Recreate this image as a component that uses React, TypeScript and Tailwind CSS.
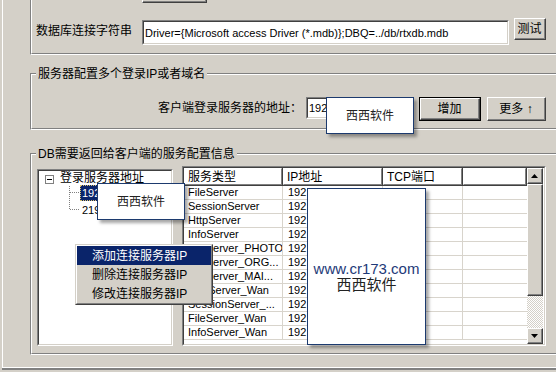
import React from "react";

type P = { className?: string; innerClass?: string; children?: React.ReactNode; def?: boolean };

function Raised({ className = "", innerClass = "", children, def = false }: P) {
  const core = (
    <div className="h-full w-full border-t border-l border-t-white border-l-white border-r border-b border-r-[#404040] border-b-[#404040]">
      <div className={`h-full w-full border-r border-b border-r-[#808080] border-b-[#808080] flex items-center justify-center ${innerClass}`}>
        {children}
      </div>
    </div>
  );
  if (def) return <div className={`border border-black ${className}`}>{core}</div>;
  return <div className={className}>{core}</div>;
}

function Sunken({ className = "", innerClass = "", children }: P) {
  return (
    <div className={`border-t border-l border-t-[#808080] border-l-[#808080] border-r border-b border-r-white border-b-white ${className}`}>
      <div className={`h-full w-full border-t border-l border-t-[#404040] border-l-[#404040] border-r border-b border-r-[#d4d0c8] border-b-[#d4d0c8] bg-white overflow-hidden ${innerClass}`}>
        {children}
      </div>
    </div>
  );
}

function Group({ className = "", title, children }: P & { title?: string }) {
  return (
    <div className={`shrink-0 border-t border-l border-t-[#808080] border-l-[#808080] border-r border-b border-r-white border-b-white ${className}`}>
      <div className="h-full w-full border-t border-l border-t-white border-l-white border-r border-b border-r-[#808080] border-b-[#808080] flex flex-col">
        {title && <div className="-mt-[8px] ml-[4px] px-[2px] self-start bg-[#d4d0c8] leading-[14px]">{title}</div>}
        {children}
      </div>
    </div>
  );
}

function HeaderCell({ className = "", children }: P) {
  return (
    <div className={`h-full border-r border-b border-r-[#404040] border-b-[#404040] ${className}`}>
      <div className="h-full border-t border-l border-t-white border-l-white border-r border-b border-r-[#808080] border-b-[#808080] pl-[3px] flex items-center whitespace-nowrap overflow-hidden">
        {children}
      </div>
    </div>
  );
}

function Watermark({ className = "", children }: P) {
  return (
    <div className={`absolute bg-white border border-[#1c3a6e] shadow-[3px_3px_3px_rgba(0,0,0,0.35)] ${className}`}>{children}</div>
  );
}

const Up = () => (
  <svg width="7" height="4" viewBox="0 0 7 4"><path d="M3.5 0 L7 4 L0 4Z" fill="black" /></svg>
);
const Down = () => (
  <svg width="7" height="4" viewBox="0 0 7 4"><path d="M0 0 L7 0 L3.5 4Z" fill="black" /></svg>
);

const rows = [
  "FileServer",
  "SessionServer",
  "HttpServer",
  "InfoServer",
  "FileServer_PHOTO",
  "FileServer_ORG...",
  "FileServer_MAI...",
  "HttpServer_Wan",
  "SessionServer_...",
  "FileServer_Wan",
  "InfoServer_Wan",
];

export default function App() {
  return (
    <div className="relative w-[556px] h-[372px] overflow-hidden bg-[#d4d0c8] font-['Liberation_Sans','Noto_Sans_CJK_SC',sans-serif] text-[12px] leading-[14px] text-black">
      <div className="ml-[2px] w-[600px] h-[368px] border-l border-b border-l-white border-b-white pl-[27px] flex flex-col">
        {/* top group */}
        <Group className="-mt-[20px] h-[75px] w-[540px]">
          <Raised className="ml-[110px] w-[65px] h-[21px]" />
          <div className="mt-[15px] flex items-start">
            <div className="ml-[4px] mt-[6px] whitespace-nowrap">数据库连接字符串</div>
            <Sunken className="ml-[10px] mt-[2px] w-[367px] h-[25px]" innerClass="pl-[1px] flex items-center">
              <span className="text-[11px] whitespace-nowrap">Driver={"{"}Microsoft access Driver (*.mdb){"}"};DBQ=../db/rtxdb.mdb</span>
            </Sunken>
            <Raised className="ml-[5px] w-[32px] h-[22px]">测试</Raised>
          </div>
        </Group>

        {/* middle group */}
        <Group className="mt-[18px] h-[57px] w-[540px]" title="服务器配置多个登录IP或者域名">
          <div className="mt-[16px] pl-[126px] flex items-start">
            <div className="w-[144px] mt-[4px] whitespace-nowrap">客户端登录服务器的地址：</div>
            <Sunken className="ml-[4px] w-[107px] h-[22px]" innerClass="pl-[1px] flex items-center">
              <span className="text-[11px] whitespace-nowrap">192</span>
            </Sunken>
            <Raised def className="ml-[6px] w-[62px] h-[24px]">增加</Raised>
            <Raised className="ml-[6px] w-[59px] h-[24px]">
              <span>更多 ↑</span>
            </Raised>
          </div>
        </Group>

        {/* bottom group */}
        <Group className="mt-[23px] h-[202px] w-[540px]" title="DB需要返回给客户端的服务配置信息">
          <div className="mt-[5px] flex items-start">
            {/* tree */}
            <Sunken className="ml-[5px] mt-[3px] w-[136px] h-[177px]" innerClass="flex flex-col">
              <div className="h-[14px] pl-[6px] flex items-center">
                <div className="mt-[2px] w-[9px] h-[9px] border border-[#808080] bg-white flex items-center justify-center">
                  <div className="w-[5px] h-[1px] bg-black" />
                </div>
                <span className="ml-[6px] whitespace-nowrap">登录服务器地址</span>
              </div>
              <div className="ml-[30px] flex">
                <svg width="11" height="34" viewBox="0 0 11 34" className="shrink-0">
                  <line x1="0.5" y1="1" x2="0.5" y2="25" stroke="#808080" strokeDasharray="1 1" />
                  <line x1="1" y1="7.5" x2="11" y2="7.5" stroke="#808080" strokeDasharray="1 1" />
                  <line x1="1" y1="24.5" x2="11" y2="24.5" stroke="#808080" strokeDasharray="1 1" />
                </svg>
                <div className="flex flex-col gap-[1px] text-[11px]">
                  <div className="h-[16px] w-[40px] px-[1px] bg-[#0a246a] text-white border border-dotted border-[#d8c070] flex items-center whitespace-nowrap">192</div>
                  <div className="h-[16px] px-[2px] flex items-center whitespace-nowrap">219</div>
                </div>
              </div>
            </Sunken>

            {/* list view */}
            <Sunken className="ml-[9px] w-[364px] h-[180px]" innerClass="flex">
              <div className="w-[343px] flex flex-col">
                <div className="flex h-[18px] shrink-0">
                  <HeaderCell className="w-[99px]">服务类型</HeaderCell>
                  <HeaderCell className="w-[100px]">IP地址</HeaderCell>
                  <HeaderCell className="w-[80px]">TCP端口</HeaderCell>
                  <HeaderCell className="flex-1" />
                </div>
                {rows.map((r) => (
                  <div key={r} className="flex h-[14px] shrink-0 border-b border-b-[#d8d4cc] text-[11px] leading-[13px]">
                    <div className="w-[99px] border-r border-r-[#d8d4cc] pl-[4px] whitespace-nowrap overflow-hidden">{r}</div>
                    <div className="w-[100px] border-r border-r-[#d8d4cc] pl-[5px] whitespace-nowrap overflow-hidden">192</div>
                    <div className="w-[80px] border-r border-r-[#d8d4cc]" />
                    <div className="flex-1" />
                  </div>
                ))}
              </div>
              <div className="w-[16px] flex flex-col bg-[#d4d0c8]">
                <Raised className="w-[16px] h-[16px] shrink-0"><Up /></Raised>
                <Raised className="w-[16px] h-[112px] shrink-0" />
                <div className="flex-1 bg-[repeating-conic-gradient(#d4d0c8_0%_25%,#ffffff_0%_50%)] bg-[length:2px_2px]" />
                <Raised className="w-[16px] h-[16px] shrink-0"><Down /></Raised>
              </div>
            </Sunken>
          </div>
        </Group>
      </div>
      <div className="ml-[2px] h-[2px] bg-[#808080]" />

      {/* context menu */}
      <div className="absolute left-[75px] top-[244px] w-[138px] h-[61px] border-t border-l border-t-[#d4d0c8] border-l-[#d4d0c8] border-r border-b border-r-[#404040] border-b-[#404040]">
        <div className="h-full w-full border-t border-l border-t-white border-l-white border-r border-b border-r-[#808080] border-b-[#808080] bg-[#d4d0c8] flex flex-col">
          <div className="h-[19px] pl-[15px] flex items-center bg-[#0a246a] text-white whitespace-nowrap">添加连接服务器IP</div>
          <div className="h-[19px] pl-[15px] flex items-center whitespace-nowrap">删除连接服务器IP</div>
          <div className="h-[19px] pl-[15px] flex items-center whitespace-nowrap">修改连接服务器IP</div>
        </div>
      </div>

      {/* watermarks */}
      <Watermark className="left-[326px] top-[97px] w-[88px] h-[37px] flex items-center justify-center">
        <span className="text-[12px] text-[#222]">西西软件</span>
      </Watermark>
      <Watermark className="left-[97px] top-[183px] w-[88px] h-[37px] flex items-center justify-center">
        <span className="text-[12px] text-[#222]">西西软件</span>
      </Watermark>
      <Watermark className="left-[307px] top-[188px] w-[119px] h-[157px] flex flex-col items-center pt-[72px] leading-[16px]">
        <span className="text-[15px] text-[#1e3a78]">www.cr173.com</span>
        <span className="text-[15px] text-[#222]">西西软件</span>
      </Watermark>
    </div>
  );
}
